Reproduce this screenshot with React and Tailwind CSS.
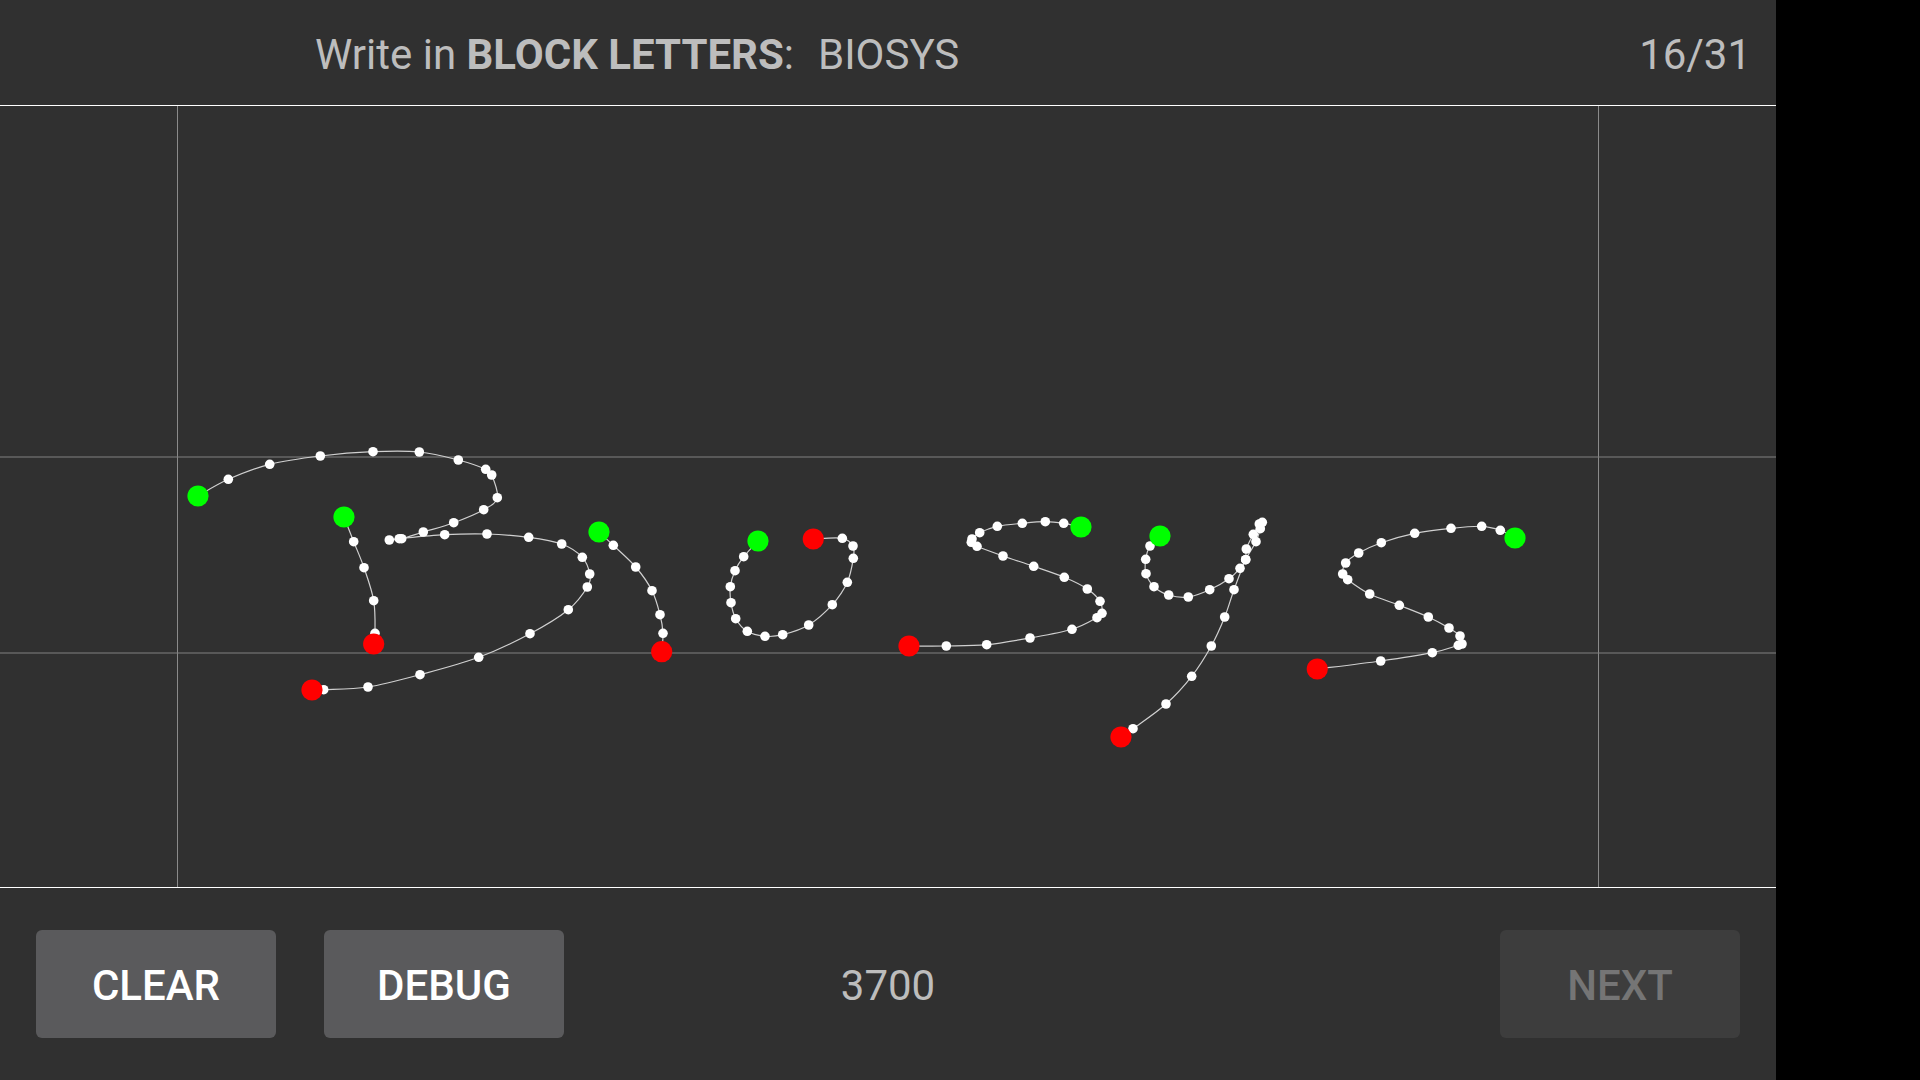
import React from "react";

const strokes = [
  [[198,496],[228.3,479.3],[269.7,464.3],[320.3,456],[373,451.7],[419.3,452],[458.3,460],[485.7,469.3],[491.7,475],[497.3,497.7],[483.7,509.7],[453.7,522.7],[423.3,532],[401.7,538.7],[389.3,540],[399.3,538.7],[444.7,534.7],[487,534],[528.7,537.3],[561.7,544],[582.3,557.3],[589.7,574],[587.3,587],[568.3,609.7],[530,633.7],[478.7,657.3],[420,674.7],[368,687],[323.7,689.7],[312,690]],
  [[344,517],[353.7,541.7],[364,567.7],[373.7,600.7],[375,633.3],[373.7,644]],
  [[599,532],[613.3,545.3],[635.7,567],[652,590.7],[660,614.7],[663,633.3],[661.7,651.7]],
  [[758,541],[743.7,556.7],[735,570.7],[730.3,586.7],[731,602.7],[735.7,618.7],[747.3,631.3],[765,636.3],[782.7,634.7],[808.7,625],[832.3,604.7],[847.3,582.3],[853.3,558.3],[853,546],[842.3,538.3],[813.3,539]],
  [[1081,527],[1063.7,523.3],[1045.3,521.7],[1022.3,523.3],[997.3,526.3],[979.7,532.7],[972,539],[971.3,542.3],[977,546.3],[1003,556],[1033.7,566.3],[1064.3,577.3],[1087.3,589],[1100,601.3],[1102,613.3],[1097,617.7],[1072,629.3],[1030,638],[986.7,644.7],[946.3,646],[909,646]],
  [[1160,536],[1150,546],[1145.7,559.3],[1146,573.7],[1154,586.7],[1168.7,595],[1188.3,597],[1209.7,589.7],[1229,578.7],[1240,568.3],[1245.7,559.7],[1246.3,549],[1253.3,534.3],[1259.3,524],[1262.3,522.3],[1260.3,528.7],[1256,541.7],[1245.7,559.7],[1234,589.7],[1224.7,617],[1211.3,646],[1191.7,676.3],[1166,704],[1133,728.7],[1121,737]],
  [[1515,538],[1500.3,530.3],[1481.7,526.3],[1451,528.3],[1414.7,533.3],[1381.3,542.7],[1358.7,553],[1345.7,563],[1342.7,574],[1347.7,579.7],[1369.7,594],[1399.3,605.3],[1428.3,617],[1449,628],[1460,636],[1462,644],[1458.3,645.3],[1432.3,652.7],[1380.7,661],[1317.3,669]],
];

// smooth line through the sample points
const toPath = (pts) => {
  let d = `M${pts[0][0]} ${pts[0][1]}`;
  for (let i = 0; i < pts.length - 1; i++) {
    const p0 = pts[i - 1] || pts[i];
    const p1 = pts[i];
    const p2 = pts[i + 1];
    const p3 = pts[i + 2] || p2;
    const c1x = p1[0] + (p2[0] - p0[0]) / 6;
    const c1y = p1[1] + (p2[1] - p0[1]) / 6;
    const c2x = p2[0] - (p3[0] - p1[0]) / 6;
    const c2y = p2[1] - (p3[1] - p1[1]) / 6;
    d += `C${c1x} ${c1y} ${c2x} ${c2y} ${p2[0]} ${p2[1]}`;
  }
  return d;
};

const Handwriting = () => (
  <svg viewBox="0 106 1776 781" className="block w-full h-full">
    <line x1="177.5" y1="106" x2="177.5" y2="887" stroke="#8a8a8a" />
    <line x1="1598.5" y1="106" x2="1598.5" y2="887" stroke="#8a8a8a" />
    <line x1="0" y1="457" x2="1776" y2="457" stroke="#808080" />
    <line x1="0" y1="653" x2="1776" y2="653" stroke="#808080" />
    {strokes.map((pts, i) => (
      <path key={i} d={toPath(pts)} fill="none" stroke="#d0d0d0" strokeWidth="1.2" />
    ))}
    {strokes.map((pts, i) =>
      pts.slice(1, -1).map((p, j) => <circle key={`${i}-${j}`} cx={p[0]} cy={p[1]} r="4.8" fill="#ffffff" />)
    )}
    {strokes.map((pts, i) => (
      <g key={i}>
        <circle cx={pts[0][0]} cy={pts[0][1]} r="10.6" fill="#00ff00" />
        <circle cx={pts[pts.length - 1][0]} cy={pts[pts.length - 1][1]} r="10.6" fill="#ff0000" />
      </g>
    ))}
  </svg>
);

const App = () => {
  return (
    <div className="w-[1920px] h-[1080px] bg-black overflow-hidden font-['Roboto',sans-serif]">
      <div className="w-[1776px] h-full flex flex-col bg-[#303030]">
        <header className="h-[106px] flex items-center justify-between pt-[4px] pl-[315px] pr-[25px] border-b border-white text-[42px] text-[#bdbdbd]">
          <div className="flex">
            <span>
              Write in <span className="font-bold">BLOCK LETTERS</span>:
            </span>
            <span className="ml-6">BIOSYS</span>
          </div>
          <span>16/31</span>
        </header>
        <main className="h-[782px] border-b border-white">
          <Handwriting />
        </main>
        <footer className="flex-1 grid grid-cols-3 items-center px-9">
          <div className="flex gap-12">
            <button className="w-[240px] h-[108px] pt-[3px] rounded-md bg-[#5a5a5c] text-white text-[42px] font-medium">CLEAR</button>
            <button className="w-[240px] h-[108px] pt-[3px] rounded-md bg-[#5a5a5c] text-white text-[42px] font-medium">DEBUG</button>
          </div>
          <div className="pt-[3px] text-center text-[42px] text-[#bdbdbd]">3700</div>
          <div className="flex justify-end">
            <button className="w-[240px] h-[108px] pt-[3px] rounded-md bg-[#3d3d3d] text-[#757575] text-[42px] font-medium">NEXT</button>
          </div>
        </footer>
      </div>
    </div>
  );
};

export default App;
